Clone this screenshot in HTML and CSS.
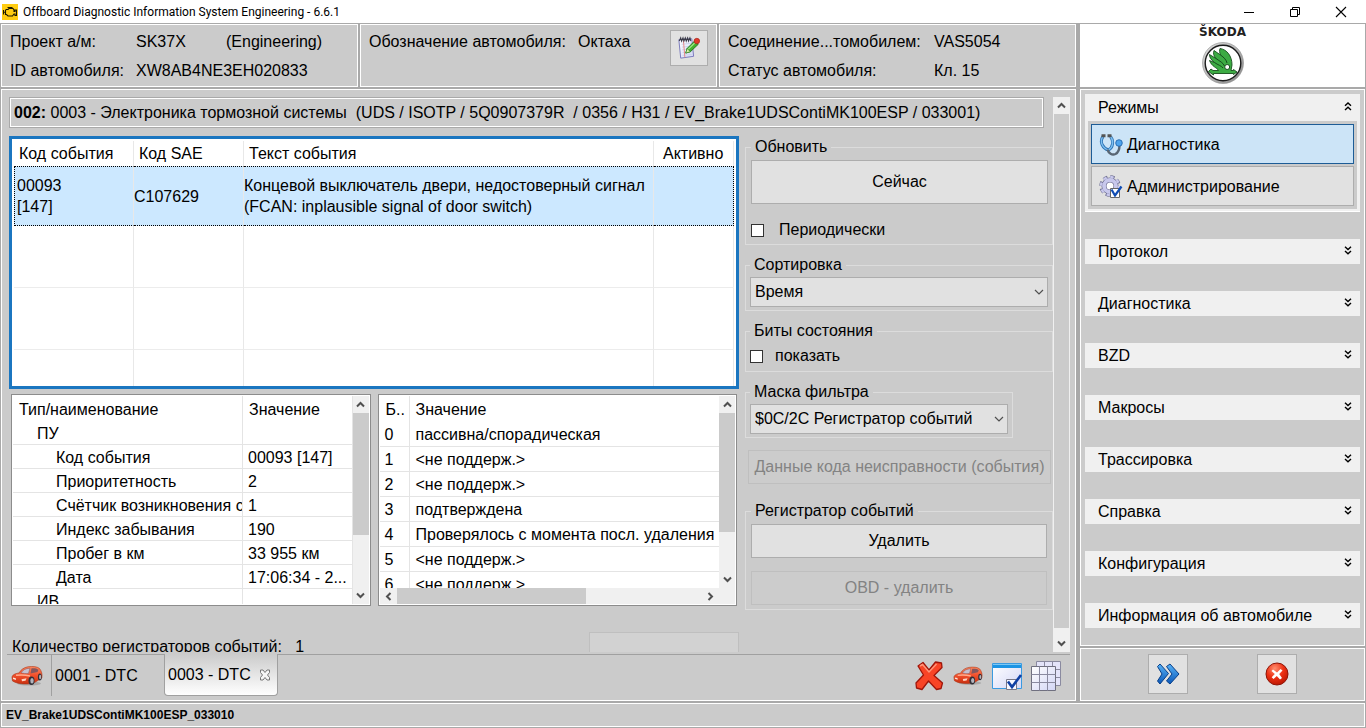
FILE: index.html
```html
<!DOCTYPE html>
<html lang="ru">
<head>
<meta charset="utf-8">
<title>Offboard Diagnostic Information System Engineering - 6.6.1</title>
<link rel="stylesheet" href="styles.css">
</head>
<body>
<svg class="defs" aria-hidden="true">
  <defs>
    <linearGradient id="redBody" x1="0" y1="0" x2="0" y2="1"><stop offset="0" stop-color="#ff8a60"/><stop offset=".5" stop-color="#f2502c"/><stop offset="1" stop-color="#c83010"/></linearGradient>
    <linearGradient id="blueArrow" x1="0" y1="0" x2="0" y2="1"><stop offset="0" stop-color="#58b4f8"/><stop offset="1" stop-color="#0b57b8"/></linearGradient>
    <linearGradient id="paleBlue" x1="0" y1="0" x2="1" y2="1"><stop offset="0" stop-color="#ffffff"/><stop offset="1" stop-color="#d3d6f6"/></linearGradient>
    <linearGradient id="chrome" x1="0" y1="0" x2="1" y2="1"><stop offset="0" stop-color="#e4e4e4"/><stop offset=".5" stop-color="#b4b4b4"/><stop offset="1" stop-color="#858585"/></linearGradient>
    <radialGradient id="redBall" cx=".4" cy=".25" r=".8"><stop offset="0" stop-color="#ff8f70"/><stop offset=".5" stop-color="#ee3215"/><stop offset="1" stop-color="#b81400"/></radialGradient>
    <symbol id="up" viewBox="0 0 9 9"><path d="M1 6.5 4.5 3 8 6.5" fill="none" stroke="#505050" stroke-width="2"/></symbol>
    <symbol id="down" viewBox="0 0 9 9"><path d="M1 2.5 4.5 6 8 2.5" fill="none" stroke="#505050" stroke-width="2"/></symbol>
    <symbol id="left" viewBox="0 0 9 9"><path d="M6.5 1 3 4.5 6.5 8" fill="none" stroke="#505050" stroke-width="2"/></symbol>
    <symbol id="right" viewBox="0 0 9 9"><path d="M2.5 1 6 4.5 2.5 8" fill="none" stroke="#505050" stroke-width="2"/></symbol>
    <symbol id="thin" viewBox="0 0 10 10"><path d="M1 3 5 7 9 3" fill="none" stroke="#505050" stroke-width="1.2"/></symbol>
    <symbol id="dblDown" viewBox="0 0 8 9"><path d="M1 .7 4 3.5 7 .7M1 4.9 4 7.7 7 4.9" fill="none" stroke="#000" stroke-width="1.4"/></symbol>
    <symbol id="dblUp" viewBox="0 0 8 9"><path d="M1 3.8 4 1 7 3.8M1 8 4 5.2 7 8" fill="none" stroke="#000" stroke-width="1.4"/></symbol>
    <symbol id="car" viewBox="0 0 32 20">
      <ellipse cx="18" cy="17.5" rx="12" ry="2" fill="#888" opacity=".5"/>
      <path d="M1 11.500C1 9 4 7.500 8 7 10 3.500 13 1.500 17 .8 22 .2 26 .5 28.500 2.500 30.500 5 31.500 8 30.800 12L22 17.500 16 18C11 18 5 17.500 1.500 15Z" fill="url(#redBody)" stroke="#a83214" stroke-width=".6"/>
      <path d="M10 6.800C12 3.800 14.500 2.500 19 2.200L17.500 7.400C15 7.700 12 7.500 10 6.800Z" fill="#c4c0d0" stroke="#8a5050" stroke-width=".5"/>
      <path d="M20.500 2.200C23.500 2 26 2.300 27.500 3.800L26.500 6 19.500 7.500Z" fill="#86565c"/>
      <path d="M5 9.300C10 8.600 15 9 19 10" fill="none" stroke="#ffac8c" stroke-width="1.400"/>
      <path d="M2 11.500 4.800 12.200 5 14 2 13Z" fill="#ffe3d6"/><path d="M10.500 13.200 15.500 12.300 14.500 14.800 11 15.200Z" fill="#ffd2c0"/>
      <ellipse cx="20.500" cy="14.800" rx="3" ry="4.200" fill="#303038"/><ellipse cx="21" cy="14.800" rx="1.700" ry="2.700" fill="#b4b4bc"/>
      <ellipse cx="28.800" cy="11" rx="1.900" ry="3.500" fill="#303038"/><ellipse cx="29.100" cy="11" rx="1" ry="2.200" fill="#b4b4bc"/>
    </symbol>
  </defs>
</svg>

<header class="titlebar">
  <svg class="app-icon" viewBox="0 0 16 16"><path fill="#ffcc10" d="M0 0h16v16H0z"/><path d="M4 5.500h2l1-1h4l1 1.500v1.500h1V6h1.500v5.500H13V10h-1l-1.500 2H6L4.500 10.500H3.500V6.500L4 5.500M5.500 3.500h5M8 3.500v1M1.500 6v4.500M1.500 8.200h2" fill="none" stroke="#1c1800" stroke-width="1.100"/></svg>
  <h1 class="app-title">Offboard Diagnostic Information System Engineering - 6.6.1</h1>
  <button class="win-btn" aria-label="Свернуть"><svg viewBox="0 0 12 12"><path d="M1 6.500h10" stroke="#000"/></svg></button>
  <button class="win-btn" aria-label="Восстановить"><svg viewBox="0 0 12 12"><path d="M1.500 3.500h7v7h-7zM3.500 3.500v-2h7v7h-2" fill="none" stroke="#000"/></svg></button>
  <button class="win-btn" aria-label="Закрыть"><svg viewBox="0 0 12 12"><path d="M1 1 11 11M11 1 1 11" stroke="#000" stroke-width="1.100"/></svg></button>
</header>

<section class="info-row">
  <div class="info-group">
    <dl class="panel info info-project"><dt>Проект а/м:</dt><dd>SK37X</dd><dd>(Engineering)</dd><dt>ID автомобиля:</dt><dd class="span">XW8AB4NE3EH020833</dd></dl>
    <div class="panel info-name">
      <dl class="info"><dt>Обозначение автомобиля:</dt><dd>Октаха</dd></dl>
      <button class="note-btn" aria-label="Заметки"><svg viewBox="0 0 26 26"><path d="M2 4 16 3 18 22 4 24Z" fill="url(#paleBlue)" stroke="#7474b8"/><path d="M5 9 15 8M5.500 12 16 11M5.500 15 16 14M6 18 16 17M6 21 16 20" stroke="#c9d4ec"/><path d="M7 5 8.500 23" stroke="#e88080"/><path d="M2.500 5.500 4 2 5 5.500 6.500 2 7.500 5.500 9 2 10 5.500 11.500 2 12.500 5.500 14 2 15 5.500" fill="none" stroke="#3c3c4a" stroke-width="1.200"/><path d="M9.500 18.500 11 13.500 19 5.500 23 9 14.500 17Z" fill="#43b32e" stroke="#23731a"/><path d="M12 14.500 20 6.800" stroke="#a0e888" stroke-width="1.400"/><path d="M9.500 18.500 11 13.500 14.500 17Z" fill="#d9f0a6" stroke="#23731a" stroke-width=".6"/><circle cx="21.500" cy="5.500" r="3" fill="#e03a2b" stroke="#a41e16" stroke-width=".7"/></svg></button>
    </div>
    <dl class="panel info info-link"><dt>Соединение...томобилем:</dt><dd>VAS5054</dd><dt>Статус автомобиля:</dt><dd>Кл. 15</dd></dl>
  </div>
  <div class="panel brand">
    <span class="brand-name">ŠKODA</span>
    <svg class="brand-logo" viewBox="0 0 44 44"><circle cx="22" cy="22" r="20.500" fill="url(#chrome)" stroke="#8c8c8c" stroke-width=".6"/><circle cx="22" cy="22" r="17.800" fill="#fff" stroke="#1c1c1c" stroke-width="1.400"/>
      <path d="M19 7.500C26 8.500 31 15 31 24L30 29.500H32.500V28.500L36 31 32.500 33.500V32.500H12.500V34L7.500 30.500 10 28 12 29.500H17.500C16 26.500 11 26 8.500 19.500L13.500 21.500C10.500 19 8.500 17 8.500 13.500L15 17.500C12.500 14.500 12 12.500 13 9.500L19.500 14C18.500 11.500 18.300 9.500 19 7.500Z" fill="#3cab43" stroke="#164c1c" stroke-width=".9" stroke-linejoin="round"/>
      <path d="M13.500 21.500C17 24 20 24.500 22 27M15 17.500C19 20.500 22 21.500 23.500 25M19.500 14C23 16.500 25.500 19 26 22" fill="none" stroke="#164c1c" stroke-width="1"/>
      <circle cx="26.200" cy="26" r="2.500" fill="#fff" stroke="#164c1c" stroke-width="1"/></svg>
  </div>
</section>

<div class="workspace">
  <main class="panel main">
    <div class="viewport">
      <div class="content">
        <h2 class="ecu"><span class="ecu-no">002:</span> 0003 - Электроника тормозной системы&nbsp; (UDS / ISOTP / 5Q0907379R&nbsp; / 0356 / H31 / EV_Brake1UDSContiMK100ESP / 033001)</h2>
        <div class="columns">
          <div class="tables">
            <div class="event-box">
              <table class="events">
                <colgroup><col class="c-code"><col class="c-sae"><col><col class="c-act"></colgroup>
                <thead><tr><th>Код события</th><th>Код SAE</th><th>Текст события</th><th>Активно</th></tr></thead>
                <tbody>
                  <tr class="selected"><td class="code">00093<br>[147]</td><td>C107629</td><td>Концевой выключатель двери, недостоверный сигнал<br>(FCAN: inplausible signal of door switch)</td><td></td></tr>
                  <tr><td></td><td></td><td></td><td></td></tr>
                  <tr><td></td><td></td><td></td><td></td></tr>
                  <tr><td></td><td></td><td></td><td></td></tr>
                </tbody>
              </table>
            </div>
            <div class="detail-row">
              <div class="detail">
                <div class="table-clip">
                  <table class="params">
                    <colgroup><col class="c-type"><col></colgroup>
                    <thead><tr><th>Тип/наименование</th><th>Значение</th></tr></thead>
                    <tbody>
                      <tr><td class="lvl1">ПУ</td><td></td></tr>
                      <tr><td class="lvl2">Код события</td><td>00093 [147]</td></tr>
                      <tr><td class="lvl2">Приоритетность</td><td>2</td></tr>
                      <tr><td class="lvl2">Счётчик возникновения с</td><td>1</td></tr>
                      <tr><td class="lvl2">Индекс забывания</td><td>190</td></tr>
                      <tr><td class="lvl2">Пробег в км</td><td>33 955 км</td></tr>
                      <tr><td class="lvl2">Дата</td><td>17:06:34 - 2...</td></tr>
                      <tr><td class="lvl1">ИВ</td><td></td></tr>
                    </tbody>
                  </table>
                </div>
                <div class="vbar"><button aria-label="Вверх"><svg><use href="#up"/></svg></button><div class="track"><div class="thumb thumb-params"></div></div><button aria-label="Вниз"><svg><use href="#down"/></svg></button></div>
              </div>
              <div class="detail detail-bits">
                <div class="table-clip">
                  <table class="bits">
                    <colgroup><col class="c-bit"><col></colgroup>
                    <thead><tr><th>Б..</th><th>Значение</th></tr></thead>
                    <tbody>
                      <tr><td>0</td><td>пассивна/спорадическая</td></tr>
                      <tr><td>1</td><td>&lt;не поддерж.&gt;</td></tr>
                      <tr><td>2</td><td>&lt;не поддерж.&gt;</td></tr>
                      <tr><td>3</td><td>подтверждена</td></tr>
                      <tr><td>4</td><td>Проверялось с момента посл. удаления</td></tr>
                      <tr><td>5</td><td>&lt;не поддерж.&gt;</td></tr>
                      <tr><td>6</td><td>&lt;не поддерж.&gt;</td></tr>
                    </tbody>
                  </table>
                </div>
                <div class="vbar"><button aria-label="Вверх"><svg><use href="#up"/></svg></button><div class="track"><div class="thumb thumb-bits"></div></div><button aria-label="Вниз"><svg><use href="#down"/></svg></button></div>
                <div class="hbar"><button aria-label="Влево"><svg><use href="#left"/></svg></button><div class="track"><div class="thumb thumb-h"></div></div><button aria-label="Вправо"><svg><use href="#right"/></svg></button></div>
              </div>
            </div>
            <div class="count-row"><span>Количество регистраторов событий:&nbsp;&nbsp; 1</span><button class="btn blank" aria-label="Действие" disabled></button></div>
          </div>
          <form class="controls">
            <fieldset class="refresh"><legend>Обновить</legend>
              <button type="button" class="btn tall">Сейчас</button>
              <label class="check periodic"><input type="checkbox">Периодически</label>
            </fieldset>
            <fieldset><legend><label for="sort">Сортировка</label></legend>
              <div class="pick"><select id="sort"><option>Время</option></select><svg><use href="#thin"/></svg></div>
            </fieldset>
            <fieldset class="state"><legend>Биты состояния</legend>
              <label class="check"><input type="checkbox">показать</label>
            </fieldset>
            <fieldset class="mask"><legend><label for="mask">Маска фильтра</label></legend>
              <div class="pick"><select id="mask"><option>$0C/2C Регистратор событий</option></select><svg><use href="#thin"/></svg></div>
            </fieldset>
            <button type="button" class="btn fault-data" disabled>Данные кода неисправности (события)</button>
            <fieldset class="registrar"><legend>Регистратор событий</legend>
              <button type="button" class="btn">Удалить</button>
              <button type="button" class="btn" disabled>OBD - удалить</button>
            </fieldset>
          </form>
        </div>
      </div>
      <div class="vbar page-bar"><button aria-label="Вверх"><svg><use href="#up"/></svg></button><div class="track"></div><button class="end" aria-label="Вниз"><svg><use href="#down"/></svg></button></div>
    </div>
    <nav class="tabs">
      <button class="car-tab" aria-label="Автомобиль"><svg class="car"><use href="#car"/></svg></button>
      <button class="tab">0001 - DTC</button>
      <button class="tab active">0003 - DTC <svg class="tab-close" viewBox="0 0 12 12"><path d="M1.500 1h2.500L6 3.500 8 1h2.500v2.500L8.500 6l2 2.500V11H8L6 8.500 4 11H1.500V8.500l2-2.500-2-2.500Z" fill="#f6f6f6" stroke="#777" stroke-width="1"/></svg></button>
      <div class="tools">
        <button aria-label="Закрыть всё"><svg viewBox="0 0 30 30"><path d="M4 5 9 1.500 15 9 21.500 1 27.500 2 28 6.500 20 14.500 28.500 22 27 27.500 22.500 28.500 14.500 20 8 28.500 2.500 27 2 22 9.500 14Z" fill="#f84426" stroke="#9e150a" stroke-width="1.300" stroke-linejoin="round"/><path d="M6 5 8.500 3.500 15 11 22.500 3" fill="none" stroke="#ff9478" stroke-width="1.500"/></svg></button>
        <button aria-label="Автомобиль"><svg class="car"><use href="#car"/></svg></button>
        <button aria-label="Выбор окна"><svg viewBox="0 0 30 30"><path d="M.5 2.500h29v25H.5z" fill="url(#paleBlue)" stroke="#3a9ae0"/><path d="M1 3h28v4H1z" fill="#1c94e4"/><path d="M1 3h28v1H1z" fill="#7cc8f4"/><path d="M14.500 18.500h10v10h-10z" fill="#f8f8ff" stroke="#777788"/><path d="M16 20.500 20 26 29 14" fill="none" stroke="#0f3fa4" stroke-width="2.600"/></svg></button>
        <button aria-label="Таблицы"><svg viewBox="0 0 30 30"><path d="M5.500.5h24v24h-24zM13.500.5v24M21.500.5v24M5.500 8.500h24M5.500 16.500h24" fill="#e4e4fa" stroke="#8a8aa0"/><path d="M.5 5.500h24v24H.5z" fill="url(#paleBlue)" stroke="#707080"/><path d="M8.500 5.500v24M16.500 5.500v24M.5 13.500h24M.5 21.500h24" stroke="#8a8aa0"/></svg></button>
      </div>
    </nav>
  </main>

  <aside class="side">
    <div class="panel menu">
      <section class="modes">
        <button class="group">Режимы<svg><use href="#dblUp"/></svg></button>
        <div class="mode-list">
          <button class="mode current"><svg viewBox="0 0 24 24"><path d="M4 3.500C0 9 4 15.500 9.500 17 14 14.500 15 8 11.500 3.500" fill="none" stroke="#2a70b4" stroke-width="3"/><path d="M4 3.500C0 9 4 15.500 9.500 17 14 14.500 15 8 11.500 3.500" fill="none" stroke="#7ec0f0" stroke-width="1.400"/><path d="M8.500 16.500C9.500 20.500 13 22.500 16.500 21 19.500 19.500 20.500 16 20.500 12" fill="none" stroke="#596674" stroke-width="2.400"/><circle cx="20" cy="10" r="3.300" fill="#4fa4ec" stroke="#1c5ea6" stroke-width=".8"/><path d="M2.500 2.800h4M8.500 2.800h4" stroke="#555" stroke-width="3"/></svg>Диагностика</button>
          <button class="mode"><svg viewBox="0 0 24 24"><g fill="none" stroke="#67678c"><circle cx="11" cy="11" r="9" stroke-width="3.400" stroke-dasharray="4.200 2.870"/><circle cx="11" cy="11" r="6" fill="#fff" stroke="#67678c" stroke-width="5"/><circle cx="11" cy="11" r="6" stroke="#c8c8ec" stroke-width="3.800"/><circle cx="11" cy="11" r="9" stroke="#c8c8ec" stroke-width="2.400" stroke-dasharray="3.400 3.670"/></g><path d="M11.500 13.500h9v9h-9z" fill="#fff" stroke="#666"/><path d="M12.500 14.500 16 20.500 22.500 11.500" fill="none" stroke="#0f4cb4" stroke-width="2.200"/></svg>Администрирование</button>
        </div>
      </section>
      <button class="group">Протокол<svg><use href="#dblDown"/></svg></button>
      <button class="group">Диагностика<svg><use href="#dblDown"/></svg></button>
      <button class="group">BZD<svg><use href="#dblDown"/></svg></button>
      <button class="group">Макросы<svg><use href="#dblDown"/></svg></button>
      <button class="group">Трассировка<svg><use href="#dblDown"/></svg></button>
      <button class="group">Справка<svg><use href="#dblDown"/></svg></button>
      <button class="group">Конфигурация<svg><use href="#dblDown"/></svg></button>
      <button class="group">Информация об автомобиле<svg><use href="#dblDown"/></svg></button>
    </div>
    <div class="panel actions">
      <button class="btn" aria-label="Далее"><svg viewBox="0 0 24 24"><path d="M1.500 4.500 4 2 12.500 11.500 4 22 1.500 19 6 12Z" fill="url(#blueArrow)" stroke="#0a3f88"/><path d="M10.500 4.500 14 2 23 12 14 22 10.500 19 16 12Z" fill="url(#blueArrow)" stroke="#0a3f88"/></svg></button>
      <button class="btn" aria-label="Отмена"><svg viewBox="0 0 24 24"><circle cx="12" cy="12" r="11" fill="url(#redBall)" stroke="#8d1508"/><path d="M8 7.500 12 10.500 15.500 7 17.500 8.500 14.200 12 17 16 15 17.500 11.800 14 8.500 17 6.700 15.300 9.800 12 6.500 9Z" fill="#fff"/></svg></button>
    </div>
  </aside>
</div>

<footer class="panel status">EV_Brake1UDSContiMK100ESP_033010</footer>
</body>
</html>
```
FILE: styles.css
```css
* { box-sizing: border-box; }
html, body { height: 100%; }
body {
  margin: 0;
  padding: 0 1px 1px;
  display: flex;
  flex-direction: column;
  overflow: hidden;
  background: #a9a9a9;
  color: #000;
  font: 16px/18px "Liberation Sans", Arial, sans-serif;
}
button, select, input { font: inherit; color: inherit; }
button { padding: 0; border: 0; background: none; }
h1, h2, dl, dd, fieldset { margin: 0; }
.defs { position: absolute; width: 0; height: 0; }
.panel { border: 1px solid #fff; background: #cbcbcb; }

.titlebar { display: flex; align-items: center; flex: none; height: 23px; margin: 0 -1px 1px; padding: 0 2px; background: #fff; }
.app-icon { width: 16px; height: 16px; }
.app-title { flex: 1; margin-left: 5px; font: 12px/16px Roboto, "Open Sans", sans-serif; }
.win-btn { width: 46px; height: 20px; display: grid; place-items: center; }
.win-btn svg { width: 12px; height: 12px; }

.info-row { display: flex; gap: 4px; flex: none; height: 63px; }
.info-group { flex: 1; display: grid; grid-template-columns: 1fr 1fr 1fr; gap: 2px; }
.info { display: grid; align-content: start; line-height: 29px; white-space: nowrap; padding: 2px 0 0 8px; }
.info-project { grid-template-columns: 126px 90px 1fr; }
.info-project .span { grid-column: span 2; }
.info-link { grid-template-columns: 206px 1fr; }
.info-name { display: flex; justify-content: space-between; padding-right: 8px; }
.info-name .info { grid-template-columns: 209px 1fr; }
.note-btn { width: 38px; height: 36px; margin-top: 5px; border: 1px solid #adadad; background: #e1e1e1; display: grid; place-items: center; }
.note-btn svg { width: 24px; height: 24px; }
.brand { width: 285px; background: #fff; display: flex; flex-direction: column; align-items: center; padding-top: 1px; }
.brand-name { font: bold 12px/12px "DejaVu Sans", sans-serif; color: #222; }
.brand-logo { width: 44px; height: 44px; margin-top: 3px; }

.workspace { flex: 1; min-height: 0; display: flex; gap: 4px; margin: 2px 0; }
.main { flex: 1; min-width: 0; display: flex; flex-direction: column; padding: 7px 5px 4px; }
.viewport { flex: 1; min-height: 0; display: flex; overflow: hidden; padding: 0 0 2px 2px; }
.content { flex: 1; min-width: 0; overflow: hidden; }
.ecu { margin: 0 9px 8px 0; padding: 5px 4px; border: 1px solid #a9a9a9; box-shadow: inset 0 0 0 1px #fff; font-size: 16px; line-height: 19px; font-weight: normal; white-space: nowrap; }
.ecu-no { font-weight: bold; }
.columns { display: flex; gap: 6px; }
.tables { flex: 1; min-width: 0; }

table { border-collapse: separate; border-spacing: 0; table-layout: fixed; width: 100%; }
th { font-weight: normal; text-align: left; }
th, td { padding: 0; white-space: nowrap; overflow: hidden; }
.event-box { height: 253px; padding: 2px; overflow: hidden; border: 3px solid #1b76c0; background: #fff; }
.events th, .events td { border-right: 1px solid #e8e8e8; }
.events th { height: 25px; padding-left: 5px; }
.events th:last-child { padding-left: 9px; }
.events td { height: 62px; padding-left: 0; border-bottom: 1px solid #ececec; line-height: 21px; }
.events .code { padding-left: 2px; }
.events .selected td { height: 60px; background: #cce8ff; border-top: 1px dotted #000; border-bottom: 1px dotted #000; }
.events .selected td:first-child { border-left: 1px dotted #000; }
.events .selected td:last-child { border-right: 1px dotted #000; }
.c-code { width: 120px; }
.c-sae { width: 110px; }
.c-act { width: 80px; }

.detail-row { display: grid; grid-template-columns: 1fr 1fr; gap: 7px; margin: 5px 2px 0; }
.detail { display: grid; grid-template-columns: 1fr 16px; height: 212px; padding: 1px; border: 1px solid #8c8c8c; background: #fff; }
.detail-bits { grid-template-rows: 1fr 16px; }
.table-clip { overflow: hidden; min-height: 0; }
.detail th { height: 26px; padding: 2px 0 0 6px; border-right: 1px solid #e4e4e4; }
.detail td { border-right: 1px solid #e4e4e4; border-bottom: 1px solid #e4e4e4; padding: 2px 0 0 5px; }
.params td { height: 24px; }
.params .lvl1 { padding-left: 24px; }
.params .lvl2 { padding-left: 43px; }
.params tr:first-child td { height: 23px; }
.c-type { width: 230px; }
.bits td { height: 25px; }
.c-bit { width: 30px; }
.bits td:nth-child(2), .bits th:nth-child(2) { padding-left: 6px; border-right: 0; }

.vbar { display: flex; flex-direction: column; background: #f0f0f0; }
.vbar button { height: 17px; display: grid; place-items: center; }
.vbar svg, .hbar svg { width: 9px; height: 9px; display: block; }
.track { flex: 1; }
.thumb { background: #cbcbcb; }
.thumb-params { height: 70%; }
.thumb-bits { height: 75%; }
.thumb-h { height: 100%; width: 62%; }
.hbar { grid-column: 1 / -1; display: flex; padding-right: 16px; background: #f0f0f0; }
.hbar button { width: 17px; display: grid; place-items: center; }
.page-bar { width: 17px; }
.page-bar .track { background: #cbcbcb; border: 1px solid #f0f0f0; border-width: 0 1px; }
.page-bar .end { height: 24px; padding-top: 7px; }

.count-row { display: flex; justify-content: space-between; align-items: flex-start; height: 34px; margin: 26px 0 0 3px; white-space: nowrap; }
.count-row span { margin-top: 6px; }
.blank { width: 150px; height: 34px; }

.controls { width: 308px; display: flex; flex-direction: column; }
fieldset { min-width: 0; margin-bottom: 11px; padding: 3px 4px; border: 1px solid #dcdcdc; }
legend { padding: 0 4px; }
.btn { display: block; width: 100%; height: 34px; border: 1px solid #adadad; background: #e1e1e1; white-space: nowrap; }
.btn:disabled { color: #838383; border-color: #bfbfbf; background: #cccccc; }
.blank.btn { width: 150px; background: #d2d2d2; }
.refresh { margin-top: 2px; padding: 4px 4px 5px 5px; }
.tall { height: 44px; margin-bottom: 17px; }
.check { display: flex; align-items: center; gap: 12px; height: 18px; }
.periodic { gap: 15px; }
.check input { appearance: none; width: 13px; height: 13px; margin: 0; border: 1px solid #333; background: #fff; }
.state { padding: 7px 4px 6px; }
.mask { width: 268px; margin-bottom: 12px; }
.pick { display: grid; align-items: center; }
.pick select, .pick svg { grid-area: 1 / 1; }
.pick select { appearance: none; width: 100%; height: 30px; padding: 0 4px; border: 1px solid #adadad; border-radius: 0; background: #e1e1e1; }
.pick svg { justify-self: end; width: 10px; height: 10px; margin-right: 4px; pointer-events: none; }
.fault-data { width: auto; margin: 0 2px 18px 3px; }
.registrar { display: grid; gap: 13px; padding: 4px 5px; }

.tabs { flex: none; display: flex; height: 42px; border-top: 1px solid #a0a0a0; }
.car-tab { width: 45px; border-right: 1px solid #a0a0a0; padding-left: 4px; }
.car { display: block; width: 32px; height: 20px; }
.tab { width: 112px; padding: 0 3px; text-align: left; }
.tab.active { display: flex; align-items: center; gap: 8px; width: 114px; margin-top: -1px; border: 1px solid #a0a0a0; border-top: 0; border-radius: 0 0 4px 4px; background: linear-gradient(#cbcbcb, #fff); }
.tab-close { width: 12px; height: 12px; }
.tools { display: flex; align-items: center; gap: 9px; margin: 0 9px 0 auto; }
.tools svg { display: block; width: 30px; height: 30px; }
.tools .car { height: 20px; }

.side { width: 285px; display: flex; flex-direction: column; gap: 2px; }
.menu { flex: 1; min-height: 0; overflow: hidden; display: flex; flex-direction: column; gap: 27px; padding: 4px; }
.group { flex: none; display: flex; align-items: center; justify-content: space-between; width: 100%; height: 25px; padding: 1px 8px 0 13px; background: #f0f0f0; text-align: left; }
.group svg { width: 8px; height: 9px; margin-bottom: 4px; }
.modes { flex: none; padding-bottom: 2px; background: #f0f0f0; border-bottom: 1px solid #fff; }
.modes .group { padding-top: 3px; }
.mode-list { display: grid; gap: 2px; margin: 2px 3px 0; padding: 3px; background: #cbcbcb; }
.mode { display: flex; align-items: center; gap: 4px; height: 40px; padding: 2px 0 0 7px; border: 1px solid #adadad; background: #e1e1e1; }
.mode svg { width: 24px; height: 24px; }
.mode.current { border-color: #1d5c96; background: #cce4f7; }
.actions { height: 53px; display: flex; justify-content: center; gap: 69px; padding: 5px 0; }
.actions .btn { width: 40px; height: 40px; display: grid; place-items: center; }
.actions svg { width: 24px; height: 24px; }
.status { flex: none; height: 24px; padding: 0 4px; font-size: 12px; line-height: 22px; font-weight: bold; }
```
